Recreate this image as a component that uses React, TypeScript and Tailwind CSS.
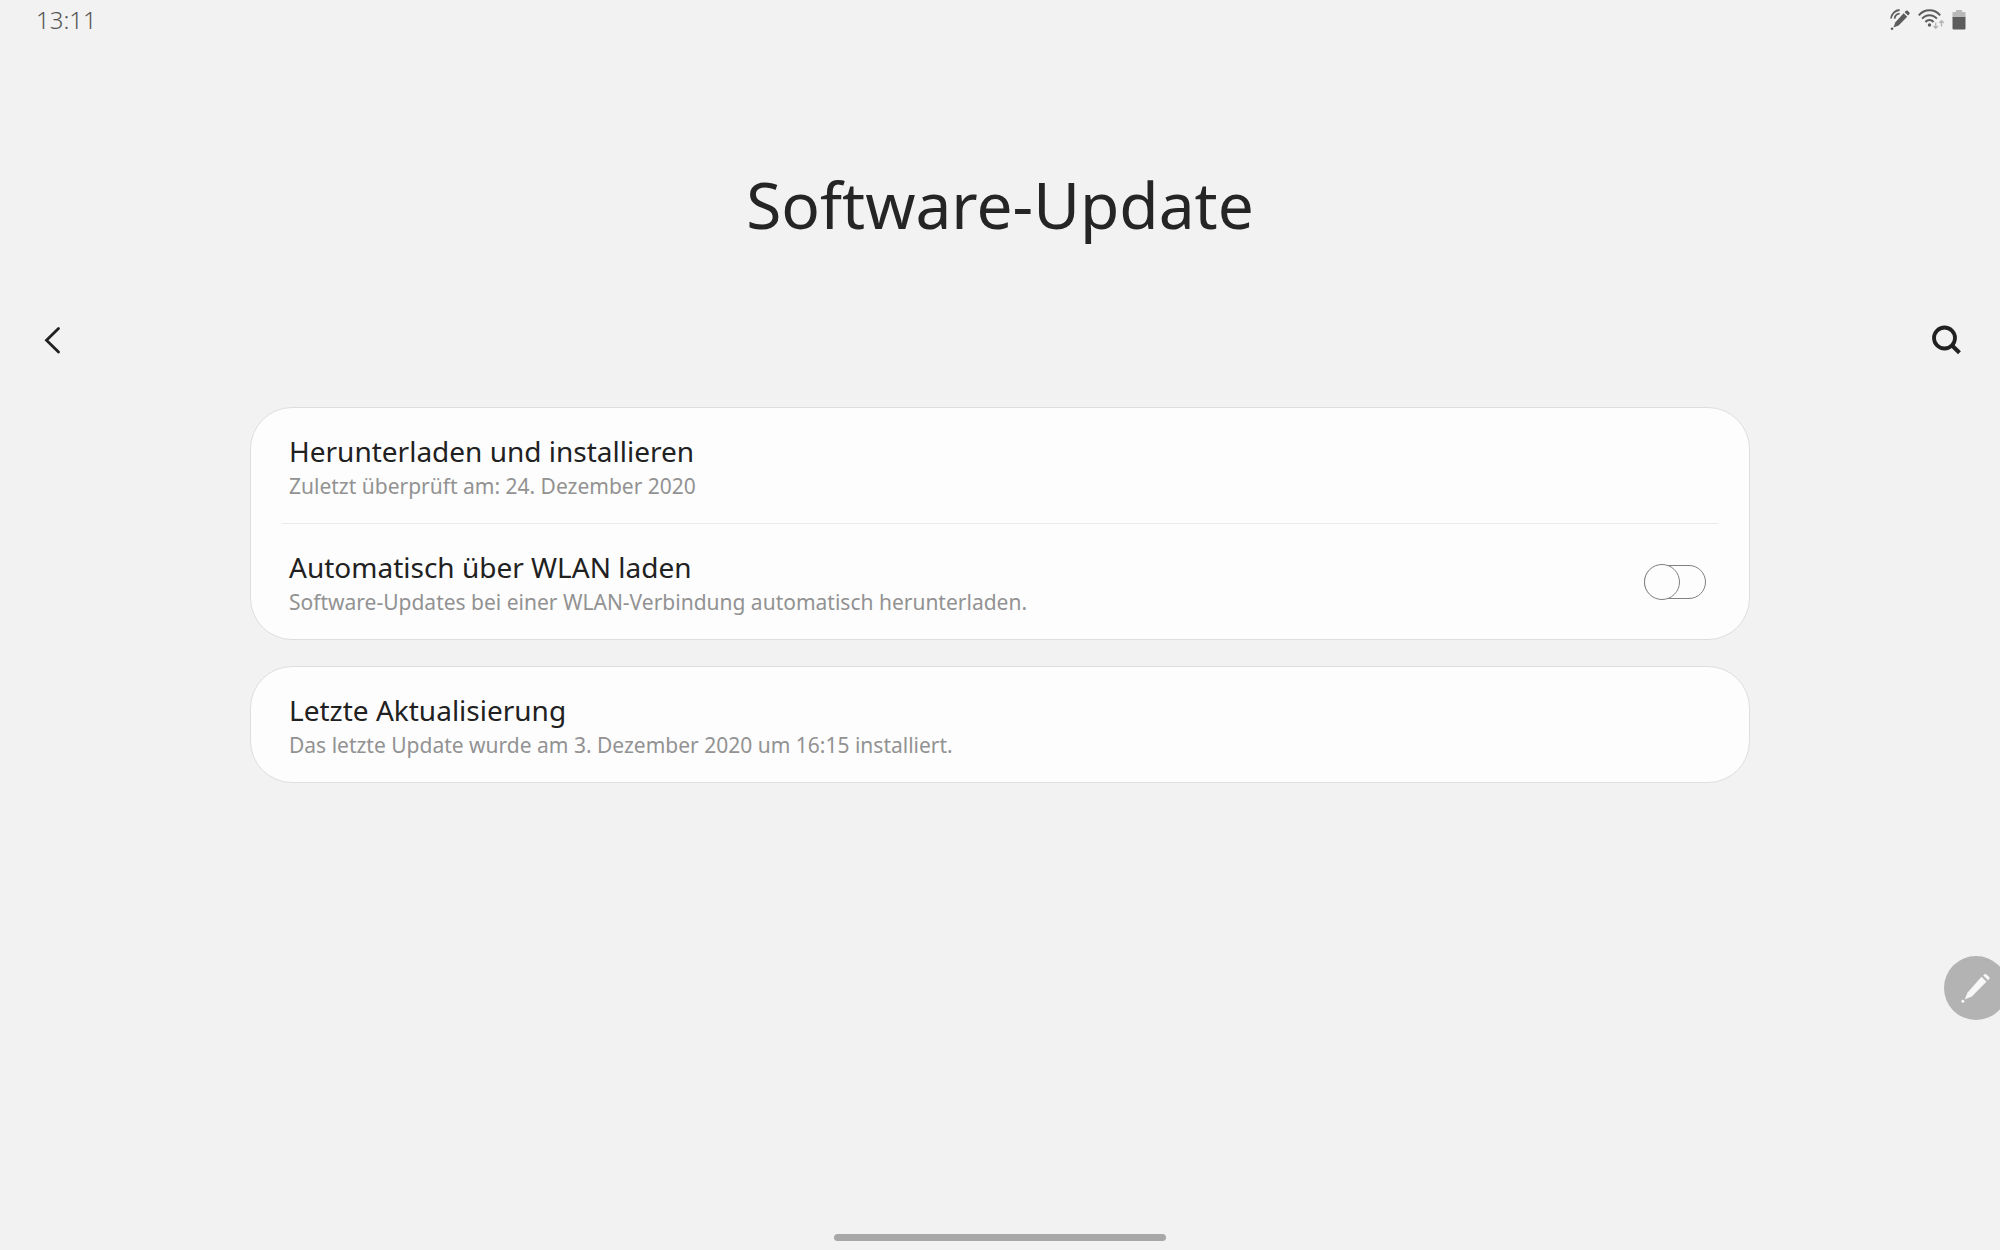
import React, {useState} from 'react';

function PenStatusIcon() {
    return (
        <svg width="20" height="22" viewBox="0 0 20 22" fill="none" aria-hidden="true">
            <path d="M1 9.5C1.6 5 5 1.2 9.6 1" stroke="#5c5c5c" strokeWidth="1.8"/>
            <path d="M4.6 9.6C4.9 7 7 4.9 9.6 4.7" stroke="#5c5c5c" strokeWidth="1.8"/>
            <path d="M13.6 4.2l3.6 3.6L8.6 16.4l-5.2 2.2 2-5.4z" fill="#5c5c5c"/>
            <path d="M14.6 3.2l1.4-1.4c.6-.5 1.2-.5 1.7 0l1.7 1.7c.5.5.4 1.1 0 1.6l-1.3 1.5z" fill="#5c5c5c"/>
            <circle cx="2" cy="19.7" r="1.3" fill="#5c5c5c"/>
        </svg>
    );
}

function WifiStatusIcon() {
    return (
        <svg width="26" height="22" viewBox="0 0 26 22" fill="none" aria-hidden="true">
            <g stroke="#5c5c5c" strokeWidth="2">
                <path d="M.8 6.3C6.5-.4 16.5-.4 22.2 6.3"/>
                <path d="M4.1 9.7c4-4.7 10.8-4.7 14.8 0"/>
                <path d="M7.4 13c2.2-2.7 6-2.7 8.2 0"/>
            </g>
            <circle cx="11.5" cy="16" r="1.7" fill="#5c5c5c"/>
            <g stroke="#b4b4b4" strokeWidth="1.4">
                <path d="M17.7 13.5v6M15.5 17l2.2 2.3 2.2-2.3"/>
                <path d="M23.5 17.5v-6M21.3 14l2.2-2.3 2.2 2.3"/>
            </g>
        </svg>
    );
}

function BatteryStatusIcon() {
    return (
        <svg width="14" height="22" viewBox="0 0 14 22" aria-hidden="true">
            <path d="M4 1h6v2h3.5v6H.5V3H4z" fill="#b8b8b8"/>
            <path d="M.5 8h13v11.5q0 1-1 1h-11q-1 0-1-1z" fill="#5c5c5c"/>
        </svg>
    );
}

function RowText({title, summary}: {title: string; summary: string}) {
    return (
        <span className="flex flex-col">
            <span className="text-[28px] leading-10 text-[#212121]">{title}</span>
            <span className="text-[21px] leading-[30px] text-[#929292]">{summary}</span>
        </span>
    );
}

function Card({children}: {children: React.ReactNode}) {
    return (
        <section className="rounded-[42px] border border-[#dedede] bg-[#fdfdfd]">
            {children}
        </section>
    );
}

export default function App() {
    const [autoDownload, setAutoDownload] = useState(false);

    return (
        <div className="relative flex min-h-screen flex-col overflow-hidden bg-[#f2f2f2] font-['Noto_Sans',sans-serif]">
            <div className="flex h-10 items-center justify-between pl-9 pr-[34px] text-[#555555]">
                <time className="text-2xl font-light">13:11</time>
                <div className="flex items-center gap-2">
                    <PenStatusIcon/>
                    <WifiStatusIcon/>
                    <BatteryStatusIcon/>
                </div>
            </div>

            <header>
                <h1 className="pt-[120px] text-center text-[64px] leading-[90px] text-[#252525]">Software-Update</h1>
                <div className="mt-[50px] flex h-20 items-center justify-between pl-7 pr-[29px]">
                    <button type="button" aria-label="Zurück" className="p-2">
                        <svg width="34" height="34" viewBox="0 0 34 34" fill="none">
                            <path d="M22.5 5.5l-12 11.8 12 11.7" stroke="#212121" strokeWidth="2.8" strokeLinecap="round"/>
                        </svg>
                    </button>
                    <button type="button" aria-label="Suchen" className="p-2">
                        <svg width="34" height="34" viewBox="0 0 34 34" fill="none" stroke="#212121">
                            <circle cx="15.5" cy="15" r="10.5" strokeWidth="3.8"/>
                            <path d="M23 22.5l7.5 7.3" strokeWidth="4"/>
                        </svg>
                    </button>
                </div>
            </header>

            <main className="mx-auto mt-[27px] flex w-3/4 flex-col gap-[26px]">
                <Card>
                    <button type="button" className="flex w-full items-center px-[38px] pb-[22px] pt-[23px] text-left">
                        <RowText title="Herunterladen und installieren" summary="Zuletzt überprüft am: 24. Dezember 2020"/>
                    </button>
                    <hr className="mx-[31px] border-[#ebebeb]"/>
                    <label className="flex items-center justify-between px-[38px] pb-[22px] pt-[23px]">
                        <RowText title="Automatisch über WLAN laden" summary="Software-Updates bei einer WLAN-Verbindung automatisch herunterladen."/>
                        <input
                            type="checkbox"
                            role="switch"
                            checked={autoDownload}
                            onChange={(e) => setAutoDownload(e.target.checked)}
                            className="mr-[5px] flex h-[34px] w-[62px] shrink-0 appearance-none items-center rounded-full border border-[#808080] bg-[#fdfdfd] before:-ml-px before:size-9 before:shrink-0 before:rounded-full before:border before:border-[#808080] before:bg-[#fdfdfd] checked:justify-end checked:bg-[#3e6de7]"
                        />
                    </label>
                </Card>

                <Card>
                    <button type="button" className="flex w-full items-center px-[38px] pb-[22px] pt-[23px] text-left">
                        <RowText title="Letzte Aktualisierung" summary="Das letzte Update wurde am 3. Dezember 2020 um 16:15 installiert."/>
                    </button>
                </Card>
            </main>

            <button
                type="button"
                aria-label="Air Command"
                className="absolute -right-2 top-[956px] flex size-16 items-center justify-center rounded-full bg-[#b3b3b3]"
            >
                <svg width="32" height="32" viewBox="0 0 32 32" fill="#f7f7f7">
                    <path d="M21.5 4.8l5 5L11.8 24.4l-7.2 3.2 3-7.2z"/>
                    <path d="M23.2 3.4l1.2-1.1c.7-.6 1.5-.5 2.1.1l2.7 2.7c.6.7.6 1.4 0 2l-1.2 1.2z"/>
                    <circle cx="2.9" cy="29.2" r="1.5"/>
                </svg>
            </button>

            <div className="mx-auto mb-[9px] mt-auto h-[7px] w-[332px] rounded-full bg-[#a8a8a8]"/>
        </div>
    );
}
